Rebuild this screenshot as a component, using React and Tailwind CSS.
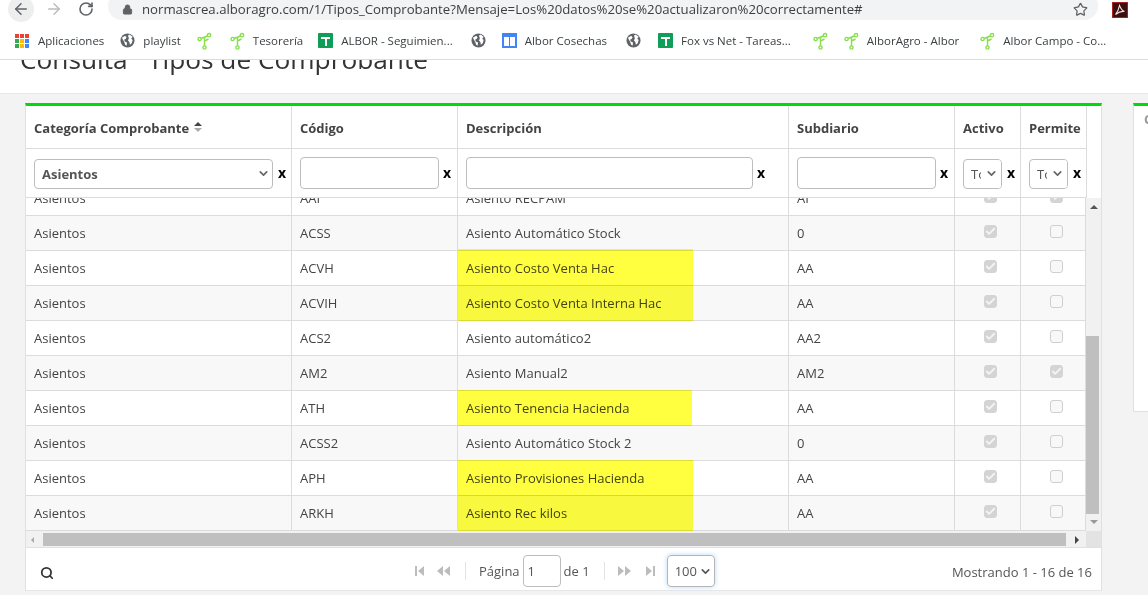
import { ArrowLeft, ArrowRight, RotateCw, Lock, Star, Search, Check, ChevronDown } from 'lucide-react';

const marks = ['bg-[#ea4335]', 'bg-[#ea4335]', 'bg-[#ea4335]', 'bg-[#34a853]', 'bg-[#fbbc04]', 'bg-[#4285f4]', 'bg-[#34a853]', 'bg-[#fbbc04]', 'bg-[#4285f4]'];

/* icono de brote de los marcadores */
const Sprout = () => (
    <svg width="15" height="18" viewBox="0 0 15 18" fill="none" stroke="#86e04a" strokeWidth="1.4" className="shrink-0">
        <path d="M7.5 14V5.5M4 6.5 10.5 4M7.5 9 11.5 7" />
        <circle cx="7.5" cy="15.5" r="1.6" />
        <circle cx="2.6" cy="7" r="1.6" />
        <circle cx="12" cy="3.2" r="1.7" />
    </svg>
);

const Globe = () => (
    <svg width="15" height="15" viewBox="0 0 16 16" className="shrink-0">
        <circle cx="8" cy="8" r="7.5" fill="#5f6368" />
        <path d="M2 5 5.5 3 7 4.5 6 6.5 4.5 7l.5 2 2.5 1-.5 3.5-1.5-1-1-3zM10 1.5l3.5 2.5-1.5 2 1.5 1.5-1 3.5-2 1.5-.5-3-1.5-1.5 1-2.5-1-2.5z" fill="#fff" />
    </svg>
);

const SheetIcon = () => (
    <span className="w-[15px] h-[15px] bg-[#0f9d58] rounded-[1px] flex items-center justify-center relative shrink-0">
        <span className="absolute w-[9px] h-[2px] bg-white top-[4px]"></span>
        <span className="absolute w-[2px] h-[9px] bg-white top-[4px]"></span>
    </span>
);

const Bookmark = ({ icon, label, className }) => (
    <div className={`flex items-center gap-[8px] shrink-0 ${className}`}>
        {icon}
        {label && <span className="text-[11.5px] text-[#3c4043] whitespace-nowrap">{label}</span>}
    </div>
);

const rows = [
    ['AAI', 'Asiento RECPAM', 'AI', true, true],
    ['ACSS', 'Asiento Automático Stock', '0', true, false],
    ['ACVH', 'Asiento Costo Venta Hac', 'AA', true, false, 'w-[235px] -top-[2px]'],
    ['ACVIH', 'Asiento Costo Venta Interna Hac', 'AA', true, false, 'w-[235px] -top-[1px]'],
    ['ACS2', 'Asiento automático2', 'AA2', true, false],
    ['AM2', 'Asiento Manual2', 'AM2', true, true],
    ['ATH', 'Asiento Tenencia Hacienda', 'AA', true, false, 'w-[234px] -top-[1px]'],
    ['ACSS2', 'Asiento Automático Stock 2', '0', true, false],
    ['APH', 'Asiento Provisiones Hacienda', 'AA', true, false, 'w-[235px] -top-[1px]'],
    ['ARKH', 'Asiento Rec kilos', 'AA', true, false, 'w-[235px] -top-[1px]'],
];

const Box = ({ checked }) => (
    <span className={`w-[13px] h-[13px] rounded-[3px] flex items-center justify-center border ${checked ? 'bg-[#d4d4d4] border-[#d4d4d4]' : 'bg-[#f8f8f8] border-[#cfcfcf]'}`}>
        {checked && <Check size={11} strokeWidth={4} color="#f4f4f4" />}
    </span>
);

const X = () => <span className="text-[14px] font-bold text-black leading-none">x</span>;

const TextFilter = ({ w }) => (
    <div className="flex items-center gap-[4px] h-full">
        <div className={`${w} h-[32px] border border-[#bdbdbd] rounded-[4px] bg-white`}></div>
        <X />
    </div>
);

const ShortSelect = () => (
    <div className="flex items-center gap-[5px]">
        <div className="w-[39px] h-[30px] mt-[1px] border border-[#bdbdbd] rounded-[4px] bg-white flex items-center pl-[7px] pt-[2px] overflow-hidden relative">
            <span className="text-[13px] text-[#555]">To</span>
            <span className="absolute right-0 top-0 bottom-0 w-[20px] bg-white flex items-center justify-center">
                <ChevronDown size={13} strokeWidth={3} color="#666" />
            </span>
        </div>
        <X />
    </div>
);

/* flechas del paginador */
const PagerIcon = ({ d }) => (
    <svg width="13" height="12" viewBox="0 0 13 12" fill="#bcbcbc" className="shrink-0"><path d={d} /></svg>
);

const headerCell = 'border-r border-[#dcdcdc] px-[8px] flex items-center shrink-0';

export default function App() {
    return (
        <div className="w-[1148px] h-[595px] overflow-hidden bg-white flex flex-col font-['Open_Sans',sans-serif]">
            {/* barra del navegador */}
            <div className="h-[22px] flex items-center shrink-0 overflow-hidden">
                <div className="w-[26px] h-[26px] ml-[8px] -mt-[5px] rounded-full bg-[#eeeeee] flex items-center justify-center shrink-0">
                    <ArrowLeft size={18} color="#5f6368" strokeWidth={2} />
                </div>
                <ArrowRight size={18} color="#bcbcbc" strokeWidth={2} className="ml-[11px] -mt-[5px] shrink-0" />
                <RotateCw size={16} color="#5f6368" strokeWidth={2.4} className="ml-[15px] -mt-[5px] shrink-0" />
                <div className="ml-[14px] w-[990px] h-[28px] -mt-[10px] pt-[8px] rounded-full bg-[#f1f3f4] flex items-center pl-[14px] pr-[10px] shrink-0">
                    <Lock size={11} color="#5f6368" fill="#5f6368" className="shrink-0 -mt-[2px]" />
                    <span className="ml-[9px] text-[13.2px] text-[#3c4043] whitespace-nowrap flex-1">normascrea.alboragro.com/1/Tipos_Comprobante?Mensaje=Los%20datos%20se%20actualizaron%20correctamente#</span>
                    <Star size={15} color="#5f6368" strokeWidth={2} className="shrink-0 -mt-[2px]" />
                </div>
                <div className="ml-[14px] w-[16px] h-[16px] -mt-[3px] bg-[#3b0f10] border border-[#a8211c] flex items-center justify-center shrink-0">
                    <svg width="12" height="12" viewBox="0 0 12 12" fill="none" stroke="#f3dede" strokeWidth="1.1">
                        <path d="M5.5 1.5C5 4 3.5 8 1.5 10.5 3.5 9 7.5 7 10.5 7.5 8.5 7 6.5 4 5.5 1.5Z" />
                    </svg>
                </div>
            </div>

            {/* marcadores */}
            <div className="h-[38px] flex items-center border-b border-[#dadce0] shrink-0 pl-[15px] overflow-hidden">
                <Bookmark className="" label="Aplicaciones" icon={
                    <span className="grid grid-cols-3 gap-[1px] w-[14px] shrink-0 mr-[1px]">
                        {marks.map((m, i) => <span key={i} className={`w-[4px] h-[4px] ${m}`}></span>)}
                    </span>
                } />
                <Bookmark className="ml-[16px]" label="playlist" icon={<Globe />} />
                <Bookmark className="ml-[16px]" icon={<Sprout />} />
                <Bookmark className="ml-[18px]" label="Tesorería" icon={<Sprout />} />
                <Bookmark className="ml-[15px]" label="ALBOR - Seguimien..." icon={<SheetIcon />} />
                <Bookmark className="ml-[18px]" icon={<Globe />} />
                <Bookmark className="ml-[16px]" label="Albor Cosechas" icon={<span className="w-[15px] h-[15px] border-2 border-[#4285f4] bg-white flex flex-col shrink-0"><span className="h-[2px] bg-[#4285f4]"></span><span className="w-[1px] flex-1 bg-[#4285f4] ml-[5px]"></span></span>} />
                <Bookmark className="ml-[19px]" icon={<Globe />} />
                <Bookmark className="ml-[17px]" label="Fox vs Net - Tareas..." icon={<SheetIcon />} />
                <Bookmark className="ml-[22px]" icon={<Sprout />} />
                <Bookmark className="ml-[16px]" label="AlborAgro - Albor" icon={<Sprout />} />
                <Bookmark className="ml-[21px]" label="Albor Campo - Co..." icon={<Sprout />} />
            </div>

            {/* titulo cortado por la barra */}
            <div className="h-[34px] border-b border-[#e7e7e7] overflow-hidden shrink-0 pl-[20px]">
                <h1 className="text-[26.25px] leading-[30px] -mt-[16px] font-normal text-[#333]">Consulta{'\u00a0\u00a0\u00a0'}Tipos de Comprobante</h1>
            </div>

            {/* cuerpo */}
            <div className="flex-1 bg-[#f3f3f3] flex pl-[25px] pt-[9px] gap-[31px] min-h-0">
                <div className="w-[1077px] h-[488px] bg-white border-x border-[#e0e0e0] border-t-[3px] border-t-[#00d90a] flex flex-col shrink-0">
                    <div className="flex h-[43px] border-b border-[#dcdcdc] w-[1061px] text-[13px] font-bold text-[#444] shrink-0">
                        <div className={`${headerCell} w-[266px] pt-[4px]`}>Categoría Comprobante
                            <span className="ml-[5px] -mt-[5px] flex flex-col gap-[2px]">
                                <span className="w-0 h-0 border-x-[4px] border-x-transparent border-b-[4px] border-b-[#444]"></span>
                                <span className="w-0 h-0 border-x-[4px] border-x-transparent border-t-[4px] border-t-[#aaa]"></span>
                            </span>
                        </div>
                        <div className={`${headerCell} w-[166px] pt-[4px]`}>Código</div>
                        <div className={`${headerCell} w-[331px] pt-[4px]`}>Descripción</div>
                        <div className={`${headerCell} w-[166px] pt-[4px]`}>Subdiario</div>
                        <div className={`${headerCell} w-[66px] pt-[4px]`}>Activo</div>
                        <div className={`${headerCell} w-[66px] pt-[4px]`}>Permite</div>
                    </div>

                    {/* filtros */}
                    <div className="flex h-[49px] border-b border-[#dcdcdc] w-[1061px] shrink-0">
                        <div className={`${headerCell} w-[266px]`}>
                            <div className="flex items-center gap-[5px]">
                                <div className="w-[239px] h-[30px] mt-[1px] border border-[#bdbdbd] rounded-[4px] bg-white flex items-center justify-between pl-[7px] pr-[2px]">
                                    <span className="text-[13px] font-bold text-[#555] pt-[2px]">Asientos</span>
                                    <ChevronDown size={13} strokeWidth={3} color="#666" />
                                </div>
                                <X />
                            </div>
                        </div>
                        <div className={`${headerCell} w-[166px]`}><TextFilter w="w-[139px]" /></div>
                        <div className={`${headerCell} w-[331px]`}><TextFilter w="w-[287px]" /></div>
                        <div className={`${headerCell} w-[166px]`}><TextFilter w="w-[139px]" /></div>
                        <div className={`${headerCell} w-[66px]`}><ShortSelect /></div>
                        <div className={`${headerCell} w-[66px]`}><ShortSelect /></div>
                    </div>

                    <div className="flex h-[333px] shrink-0">
                        {/* filas */}
                        <div className="w-[1060px] overflow-hidden">
                            <div className="-mt-[17px]">
                                {rows.map((r, i) => (
                                    <div key={r[0]} className={`flex h-[35px] border-b border-[#dcdcdc] text-[13px] text-[#444] ${i % 2 ? 'bg-[#f8f8f8]' : 'bg-white'}`}>
                                        <div className={`${headerCell} w-[266px] pt-[2px]`}>Asientos</div>
                                        <div className={`${headerCell} w-[166px] pt-[2px]`}>{r[0]}</div>
                                        <div className={`${headerCell} w-[331px] pt-[2px] relative`}>
                                            <span className="relative">{r[1]}</span>
                                            {r[5] && <span className={`absolute left-0 bottom-[-1px] ${r[5]} bg-[#ffff40] mix-blend-multiply`}></span>}
                                        </div>
                                        <div className={`${headerCell} w-[166px] pt-[2px]`}>{r[2]}</div>
                                        <div className={`${headerCell} w-[66px] pl-[29px] pb-[3px]`}><Box checked={r[3]} /></div>
                                        <div className={`${headerCell} w-[65px] pl-[29px] pb-[3px]`}><Box checked={r[4]} /></div>
                                    </div>
                                ))}
                            </div>
                        </div>
                        {/* scroll vertical */}
                        <div className="w-[15px] bg-[#f1f1f1] flex flex-col items-center justify-between shrink-0 relative">
                            <span className="mt-[7px] w-0 h-0 border-x-[4px] border-x-transparent border-b-[4px] border-b-[#555]"></span>
                            <span className="absolute left-0 right-[2px] top-[138px] h-[178px] bg-[#bfbfbf]"></span>
                            <span className="mb-[7px] w-0 h-0 border-x-[4px] border-x-transparent border-t-[4px] border-t-[#999]"></span>
                        </div>
                    </div>

                    {/* scroll horizontal */}
                    <div className="h-[17px] flex items-stretch border-b border-[#e0e0e0] shrink-0">
                        <div className="w-[1060px] bg-[#f1f1f1] flex items-center pt-[1px]">
                            <span className="ml-[5px] w-0 h-0 border-y-[3px] border-y-transparent border-r-[3px] border-r-[#aaa]"></span>
                            <span className="ml-[9px] w-[1023px] h-[13px] bg-[#bfbfbf]"></span>
                            <span className="ml-[9px] w-0 h-0 border-y-[4px] border-y-transparent border-l-[4px] border-l-[#444]"></span>
                        </div>
                        <div className="w-[15px] bg-[#e3e3e3]"></div>
                    </div>

                    {/* paginador */}
                    <div className="h-[43px] pt-[4px] flex items-center pl-[14px] pr-[9px] text-[13px] text-[#555] border-b border-[#e6e6e6] shrink-0">
                        <div className="w-[375px] shrink-0 pt-[3px]"><Search size={14} strokeWidth={3} color="#333" /></div>
                        <div className="flex items-center">
                            <PagerIcon d="M0 1h2v10H0zM9 1v10L3 6z" />
                            <span className="ml-[9px]"><PagerIcon d="M6 1v10L0 6zM13 1v10L7 6z" /></span>
                            <span className="ml-[15px] w-px h-[18px] bg-[#e3e3e3]"></span>
                            <span className="ml-[13px] pt-[2px]">Página</span>
                            <span className="ml-[3px] w-[38px] h-[32px] border border-[#bdbdbd] rounded-[4px] flex items-center pl-[4px] pt-[2px]">1</span>
                            <span className="ml-[3px] pt-[2px]">de 1</span>
                            <span className="ml-[14px] w-px h-[18px] bg-[#e3e3e3]"></span>
                            <span className="ml-[13px]"><PagerIcon d="M0 1v10l6-5zM7 1v10l6-5z" /></span>
                            <span className="ml-[15px]"><PagerIcon d="M0 1v10l6-5zM7 1h2v10H7z" /></span>
                            <span className="ml-[8px] w-[48px] h-[32px] border border-[#b5b5b5] rounded-[4px] shadow-[0_0_5px_#b8d8f5] flex items-center justify-between pl-[7px] pr-[2px]"><span className="pt-[2px]">100</span><ChevronDown size={13} strokeWidth={3} color="#555" /></span>
                        </div>
                        <span className="ml-auto pt-[3px]">Mostrando 1 - 16 de 16</span>
                    </div>
                </div>

                <div className="h-[309px] w-[40px] bg-white border-l border-b border-[#e0e0e0] border-t-[3px] border-t-[#00d90a] pl-[10px] pt-[4px] text-[13px] text-[#999] font-bold overflow-hidden shrink-0">C</div>
            </div>
        </div>
    );
}
